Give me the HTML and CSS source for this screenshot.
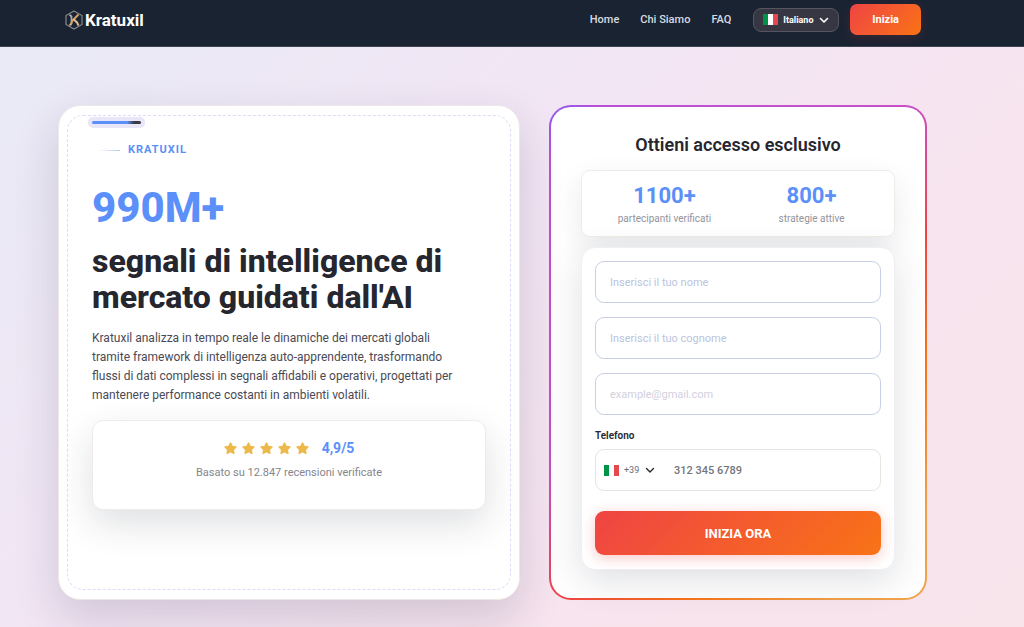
FILE: index.html
```
<!DOCTYPE html>
<html lang="it">

<head>
    <meta charset="utf-8">
    <meta name="viewport" content="width=device-width, initial-scale=1">
    <title>Kratuxil</title>
    <link rel="stylesheet" href="styles.css">
</head>

<body>
    <header class="header">
        <a class="logo" href="#">
            <svg class="logo-mark" viewBox="0 0 20 20" fill="none">
                <path d="M10 1 L18 5.5 V14.5 L10 19 L2 14.5 V5.5 Z" stroke="#85878c" stroke-width="1.2"/>
                <path d="M5.5 4.8 L7.5 6.5 V13.5 L5.5 15.5" stroke="#a7a9ad" stroke-width="1.8"/>
                <path d="M14.5 4.5 L8.5 10.5 L6.5 15.2" stroke="#d9a566" stroke-width="1.9"/>
                <path d="M9.5 9.2 L13 12.4 L14.5 15.5" stroke="#dfbd90" stroke-width="2"/>
            </svg>
            <span>Kratuxil</span>
        </a>
        <nav class="nav">
            <a href="#">Home</a>
            <a href="#">Chi Siamo</a>
            <a href="#">FAQ</a>
        </nav>
        <div class="lang">
            <svg class="flag" viewBox="0 0 15 11">
                <rect width="5" height="11" fill="#009246"/>
                <rect x="5" width="5" height="11" fill="#fff"/>
                <rect x="10" width="5" height="11" fill="#e5484d"/>
            </svg>
            <select class="lang-select" aria-label="Lingua">
                <option>Italiano</option>
            </select>
            <svg class="chevron" viewBox="0 0 10 10" fill="none" stroke="currentColor" stroke-width="1.6" stroke-linecap="round" stroke-linejoin="round">
                <path d="M1.5 3.5 L5 7 L8.5 3.5"/>
            </svg>
        </div>
        <a class="start" href="#signup">Inizia</a>
    </header>

    <main class="hero">
        <section class="intro">
            <div class="progress"><span></span></div>
            <div class="kicker">KRATUXIL</div>
            <h1 class="title"><span class="amount">990M+</span> segnali di intelligence di mercato guidati dall'AI</h1>
            <p class="lead">Kratuxil analizza in tempo reale le dinamiche dei mercati globali tramite framework di intelligenza auto-apprendente, trasformando flussi di dati complessi in segnali affidabili e operativi, progettati per mantenere performance costanti in ambienti volatili.</p>
            <div class="rating">
                <div class="rating-row">
                    <svg class="star" viewBox="0 0 12 12"><path d="M6 1 L7.5 4.1 L11 4.6 L8.5 7 L9.1 10.5 L6 8.9 L2.9 10.5 L3.5 7 L1 4.6 L4.5 4.1 Z"/></svg>
                    <svg class="star" viewBox="0 0 12 12"><path d="M6 1 L7.5 4.1 L11 4.6 L8.5 7 L9.1 10.5 L6 8.9 L2.9 10.5 L3.5 7 L1 4.6 L4.5 4.1 Z"/></svg>
                    <svg class="star" viewBox="0 0 12 12"><path d="M6 1 L7.5 4.1 L11 4.6 L8.5 7 L9.1 10.5 L6 8.9 L2.9 10.5 L3.5 7 L1 4.6 L4.5 4.1 Z"/></svg>
                    <svg class="star" viewBox="0 0 12 12"><path d="M6 1 L7.5 4.1 L11 4.6 L8.5 7 L9.1 10.5 L6 8.9 L2.9 10.5 L3.5 7 L1 4.6 L4.5 4.1 Z"/></svg>
                    <svg class="star" viewBox="0 0 12 12"><path d="M6 1 L7.5 4.1 L11 4.6 L8.5 7 L9.1 10.5 L6 8.9 L2.9 10.5 L3.5 7 L1 4.6 L4.5 4.1 Z"/></svg>
                    <strong class="score">4,9/5</strong>
                </div>
                <div class="reviews">Basato su 12.847 recensioni verificate</div>
            </div>
        </section>

        <section class="signup" id="signup">
            <h2 class="signup-title">Ottieni accesso esclusivo</h2>
            <div class="stats">
                <div class="stat"><strong>1100+</strong><span>partecipanti verificati</span></div>
                <div class="stat"><strong>800+</strong><span>strategie attive</span></div>
            </div>
            <form class="form">
                <input class="field" type="text" placeholder="Inserisci il tuo nome" aria-label="Nome">
                <input class="field" type="text" placeholder="Inserisci il tuo cognome" aria-label="Cognome">
                <input class="field field-email" type="email" placeholder="example@gmail.com" aria-label="Email">
                <div class="phone-group">
                    <label class="label" for="phone">Telefono</label>
                    <div class="phone">
                        <svg class="flag" viewBox="0 0 15 11">
                            <rect width="5" height="11" fill="#009246"/>
                            <rect x="5" width="5" height="11" fill="#fff"/>
                            <rect x="10" width="5" height="11" fill="#e5484d"/>
                        </svg>
                        <select class="prefix" aria-label="Prefisso">
                            <option>+39</option>
                        </select>
                        <svg class="chevron" viewBox="0 0 10 10" fill="none" stroke="currentColor" stroke-width="1.4" stroke-linecap="round" stroke-linejoin="round">
                            <path d="M1.5 3.5 L5 7 L8.5 3.5"/>
                        </svg>
                        <input class="phone-input" id="phone" type="tel" placeholder="312 345 6789">
                    </div>
                </div>
                <button class="submit" type="submit">INIZIA ORA</button>
            </form>
        </section>
    </main>
</body>

</html>
```
FILE: styles.css
```
* {
    box-sizing: border-box;
}

body {
    margin: 0;
    min-height: 100vh;
    font-family: Roboto, "Liberation Sans", sans-serif;
    font-size: 12px;
    color: #26262e;
    background: linear-gradient(135deg, #e8eaf6 0%, #f3e5f4 45%, #f7e4ee 72%, #f8e4eb 100%);
}

a {
    color: inherit;
    text-decoration: none;
}

input, select, button {
    font-family: inherit;
}

select {
    appearance: none;
    padding: 0;
    border: 0;
    background: none;
}

/* header */
.header {
    display: flex;
    align-items: center;
    height: 47px;
    padding: 0 103px 7px 64px;
    color: #fff;
    background: #1a2332;
    border-bottom: 1px solid #3c4350;
}

.logo {
    display: flex;
    align-items: center;
    gap: 1px;
    margin-right: auto;
    font-size: 17px;
    font-weight: 700;
}

.logo-mark {
    width: 20px;
    height: 20px;
}

.nav {
    display: flex;
    gap: 21px;
    margin-right: 22px;
    font-size: 11px;
    font-weight: 500;
    color: #d8dae0;
}

.lang {
    display: flex;
    align-items: center;
    gap: 5px;
    height: 24px;
    margin-right: 11px;
    padding: 0 9px;
    background: #373744;
    border: 1px solid #555562;
    border-radius: 8px;
}

.lang-select {
    color: #fff;
    font-size: 9px;
    font-weight: 700;
}

.flag {
    flex: none;
    width: 15px;
    height: 11px;
}

.chevron {
    flex: none;
    width: 10px;
    height: 10px;
    pointer-events: none;
}

.start {
    padding: 0 22px;
    font-size: 11px;
    font-weight: 700;
    line-height: 31px;
    background: linear-gradient(135deg, #ef4444, #f97316);
    border-radius: 7px;
    box-shadow: 0 3px 11px rgba(239, 68, 68, .15);
}

/* hero */
.hero {
    display: grid;
    grid-template-columns: minmax(0, 11fr) minmax(0, 9fr);
    gap: 29px;
    padding: 58px 97px 28px 58px;
}

.intro {
    position: relative;
    padding: 11px 33px 33px;
    background: #fff;
    border: 1px solid #eee9e6;
    border-radius: 22px;
    box-shadow: 0 18px 45px rgba(30, 30, 60, .16);
}

/* dashed frame inside the card */
.intro::before {
    content: "";
    position: absolute;
    inset: 9px 8px;
    border: 1px dashed #dcdcfa;
    border-radius: 16px;
    pointer-events: none;
}

.progress {
    position: relative;
    width: 57px;
    margin-left: -4px;
    padding: 4px;
    background: #e8e6f7;
    border-radius: 5px;
}

.progress span {
    display: block;
    height: 3px;
    border-radius: 2px;
    background: linear-gradient(90deg, #5b8ff9 72%, #3a3a44 86%);
}

.kicker {
    display: flex;
    align-items: center;
    gap: 8px;
    margin: 15px 0 0 6px;
    font-size: 11px;
    font-weight: 700;
    line-height: 14px;
    letter-spacing: 1px;
    color: #5b8ff9;
}

.kicker::before {
    content: "";
    width: 22px;
    height: 1px;
    background: linear-gradient(90deg, #fff, #b4c5f0);
}

.title {
    margin: 25px 0 14px;
    font-size: 32px;
    font-weight: 800;
    line-height: 36px;
}

.amount {
    display: block;
    margin-bottom: 9px;
    font-size: 42px;
    line-height: 52px;
    color: #5b8ff9;
}

.lead {
    max-width: 370px;
    margin: 0 0 15px;
    line-height: 19px;
    color: #4a4a54;
}

.rating {
    padding: 18px 14px 29px;
    text-align: center;
    background: #fff;
    border: 1px solid #efece8;
    border-radius: 11px;
    box-shadow: 0 14px 36px rgba(26, 35, 50, .14);
}

.rating-row {
    display: flex;
    align-items: center;
    justify-content: center;
    gap: 5px;
    line-height: 18px;
}

.star {
    width: 13px;
    height: 13px;
    fill: #edb94a;
    stroke: #edb94a;
    stroke-width: 1.4;
    stroke-linejoin: round;
}

.score {
    margin-left: 8px;
    font-size: 14px;
    color: #5b8ff9;
}

.reviews {
    margin-top: 8px;
    font-size: 11px;
    line-height: 15px;
    color: #85858d;
}

/* sign-up card */
.signup {
    padding: 27px 30px 28px;
    border: 2px solid transparent;
    border-radius: 22px;
    background:
        linear-gradient(#fff, #fff) padding-box,
        linear-gradient(135deg, #8b5cf6, #b950d6 6%, #c850c8 42%, #ef4444 58%, #f97316 72%, #f0a34a 90%) border-box;
}

.signup-title {
    margin: 0 0 14px;
    font-size: 18px;
    font-weight: 600;
    line-height: 22px;
    text-align: center;
}

.stats {
    display: grid;
    grid-template-columns: 1fr 1fr;
    margin-bottom: 10px;
    padding: 11px 9px 10px;
    border: 1px solid #efece8;
    border-radius: 9px;
    box-shadow: 0 11px 29px rgba(26, 35, 50, .1);
}

.stat {
    text-align: center;
}

.stat strong {
    display: block;
    font-size: 22px;
    font-weight: 700;
    line-height: 28px;
    color: #5b8ff9;
}

.stat span {
    display: block;
    margin-top: 2px;
    font-size: 10px;
    line-height: 14px;
    color: #93939b;
}

.form {
    display: flex;
    flex-direction: column;
    gap: 14px;
    padding: 13px 13px 14px;
    background: #fff;
    border: 1px solid #f0f0f4;
    border-radius: 14px;
    box-shadow: 0 11px 36px rgba(26, 35, 60, .14);
}

.field {
    width: 100%;
    height: 42px;
    padding: 0 14px;
    font-size: 11px;
    background: #fff;
    border: 1px solid #c9d0e6;
    border-radius: 9px;
}

.field::placeholder {
    color: #bcc4dc;
}

.field-email::placeholder {
    color: #d3cfdd;
}

.label {
    display: block;
    margin-bottom: 6px;
    font-size: 10px;
    font-weight: 600;
    line-height: 14px;
}

.phone {
    display: flex;
    align-items: center;
    gap: 5px;
    height: 42px;
    padding: 0 8px;
    border: 1px solid #e8e4e2;
    border-radius: 9px;
}

.prefix {
    font-size: 9px;
    color: #6b6b73;
}

.phone-input {
    flex: 1;
    min-width: 0;
    padding: 0 0 0 14px;
    font-size: 11px;
    font-weight: 500;
    border: 0;
    background: none;
}

.phone-input::placeholder {
    color: #75757c;
}

.submit {
    height: 44px;
    margin-top: 6px;
    font-size: 13px;
    font-weight: 700;
    color: #fff;
    background: linear-gradient(135deg, #ef4444, #f97316);
    border: 0;
    border-radius: 9px;
    box-shadow: 0 3px 14px rgba(239, 68, 68, .3);
}
```
